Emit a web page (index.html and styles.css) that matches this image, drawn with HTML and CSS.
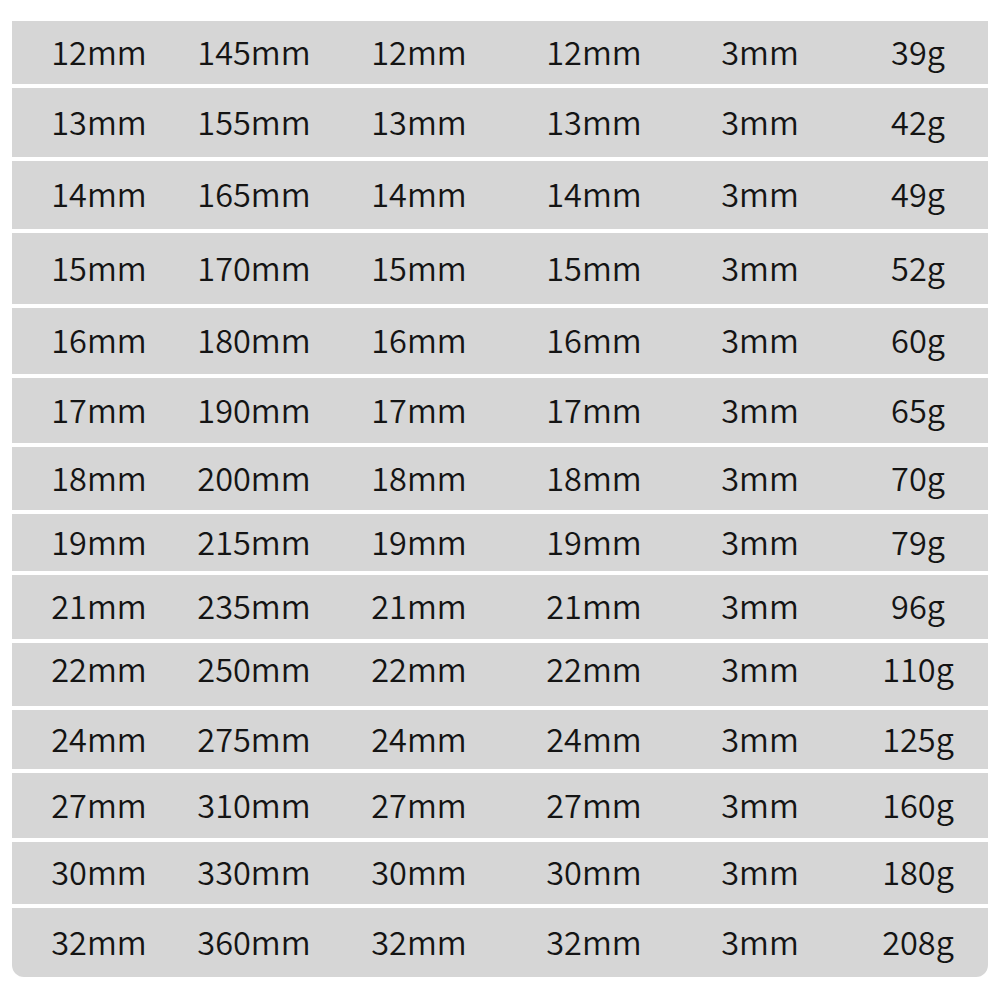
FILE: index.html
```html
<!DOCTYPE html>
<html>
<head>
<meta charset="utf-8">
<link rel="stylesheet" href="styles.css">
</head>
<body>
<div class="table">
  <div class="row"><span>12mm</span><span>145mm</span><span>12mm</span><span>12mm</span><span>3mm</span><span>39g</span></div>
  <div class="row"><span>13mm</span><span>155mm</span><span>13mm</span><span>13mm</span><span>3mm</span><span>42g</span></div>
  <div class="row"><span>14mm</span><span>165mm</span><span>14mm</span><span>14mm</span><span>3mm</span><span>49g</span></div>
  <div class="row"><span>15mm</span><span>170mm</span><span>15mm</span><span>15mm</span><span>3mm</span><span>52g</span></div>
  <div class="row"><span>16mm</span><span>180mm</span><span>16mm</span><span>16mm</span><span>3mm</span><span>60g</span></div>
  <div class="row"><span>17mm</span><span>190mm</span><span>17mm</span><span>17mm</span><span>3mm</span><span>65g</span></div>
  <div class="row"><span>18mm</span><span>200mm</span><span>18mm</span><span>18mm</span><span>3mm</span><span>70g</span></div>
  <div class="row"><span>19mm</span><span>215mm</span><span>19mm</span><span>19mm</span><span>3mm</span><span>79g</span></div>
  <div class="row"><span>21mm</span><span>235mm</span><span>21mm</span><span>21mm</span><span>3mm</span><span>96g</span></div>
  <div class="row up"><span>22mm</span><span>250mm</span><span>22mm</span><span>22mm</span><span>3mm</span><span>110g</span></div>
  <div class="row"><span>24mm</span><span>275mm</span><span>24mm</span><span>24mm</span><span>3mm</span><span>125g</span></div>
  <div class="row"><span>27mm</span><span>310mm</span><span>27mm</span><span>27mm</span><span>3mm</span><span>160g</span></div>
  <div class="row"><span>30mm</span><span>330mm</span><span>30mm</span><span>30mm</span><span>3mm</span><span>180g</span></div>
  <div class="row"><span>32mm</span><span>360mm</span><span>32mm</span><span>32mm</span><span>3mm</span><span>208g</span></div>
</div>
</body>
</html>
```
FILE: styles.css
```css
html, body {
  margin: 0;
  padding: 0;
  background: #ffffff;
}
body {
  padding: 21px 12px 0 12px;
  font-family: "Noto Sans CJK SC", "Noto Sans", sans-serif;
}
.table {
  width: 976px;
  display: grid;
  grid-template-rows: 62.5px 68.5px 67.5px 70.5px 65.5px 64.5px 62.5px 56.5px 63.5px 62.5px 58.5px 64.5px 61.5px 69px;
  row-gap: 4.5px;
  border-radius: 0 0 12px 12px;
  overflow: hidden;
}
.row {
  background: #d6d6d6;
  display: grid;
  grid-template-columns: 174px 136px 194px 156px 176px 140px;
  align-items: center;
  justify-items: center;
  color: #141414;
  font-size: 32.5px;
  font-weight: 350;
  line-height: 1;
  padding-bottom: 3px;
}
.row.up {
  padding-bottom: 12px;
}
.row span {
  display: block;
}
```
